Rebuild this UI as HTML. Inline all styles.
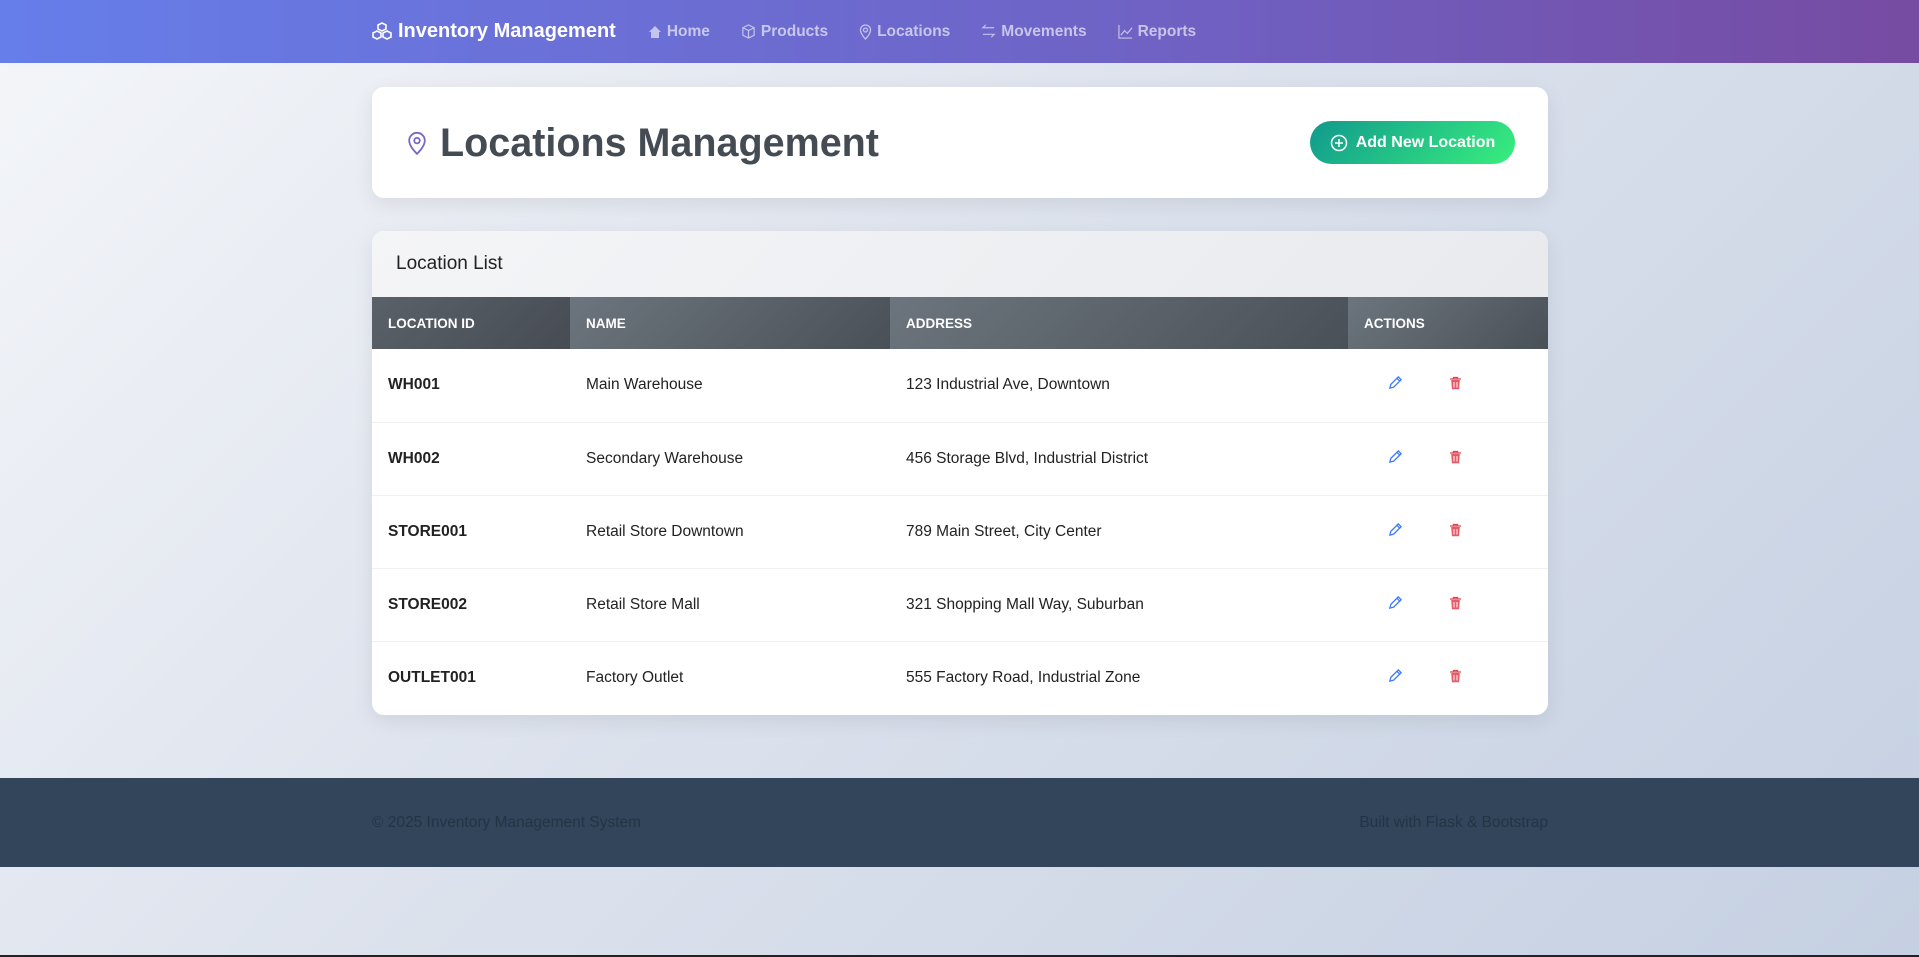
<!DOCTYPE html>
<html><head><meta charset="utf-8"><style>
*{box-sizing:border-box;margin:0;padding:0}
body{width:1919px;height:957px;overflow:hidden;font-family:"Liberation Sans",sans-serif;background:linear-gradient(135deg,#f4f6f9 0%,#dfe4ee 40%,#c5d0e2 100%);position:relative}
.nav{height:63px;background:linear-gradient(90deg,#667eea 0%,#6f62c4 60%,#764ba2 100%);display:flex;align-items:center;padding-left:372px;color:#fff}
.brand{font-weight:bold;font-size:20px;display:flex;align-items:center;gap:6px;margin-right:32px}
.nl{display:flex;align-items:center;gap:5px;color:rgba(255,255,255,.62);font-size:15.5px;font-weight:bold;margin-right:31px}
.card{position:absolute;left:372px;width:1176px;background:#fff;border-radius:12px;box-shadow:0 6px 20px rgba(0,0,0,.08)}
.hc{top:87px;height:111px}
.hc h1{position:absolute;left:68px;top:34px;font-size:39.5px;color:#444b53;font-weight:bold}
.btn{position:absolute;left:938px;top:34px;width:205px;height:43px;border-radius:22px;background:linear-gradient(135deg,#11998e,#38ef7d);color:#fff;font-weight:bold;font-size:16px;display:flex;align-items:center;justify-content:center;gap:8px}
.tc{top:231px;height:484px;overflow:hidden}
.ch{height:66px;background:linear-gradient(135deg,#f4f5f7,#e8eaee);padding:22px 24px;font-size:19px;color:#222}
table{border-collapse:collapse;width:100%;font-size:15.5px;color:#222}
th{height:52px;text-align:left;padding-left:16px;color:#fff;font-size:13.5px;background:linear-gradient(135deg,#6c757d,#4a5058)}
th:first-child{background:linear-gradient(135deg,#5a6169,#474c54)}
td{height:73px;padding-left:16px;border-bottom:1px solid #f0f0f0}
td.b{font-weight:bold}
.ft{position:absolute;top:778px;left:0;width:1919px;height:89px;background:#32455b;color:#253445;font-size:15.5px}
.ft span{position:absolute;top:36px}
</style></head><body>
<div class="nav">
<div class="brand"><svg width="20" height="20" viewBox="0 0 20 20" fill="none" stroke="#fff" stroke-width="1.6"><path d="M10 1l4 2v4l-4 2-4-2V3z M5 9l4 2v4l-4 2-4-2v-4z M15 9l4 2v4l-4 2-4-2v-4z"/></svg>Inventory Management</div>
<div class="nl"><svg width="14" height="14" viewBox="0 0 14 14"><path d="M7 1L1 7h2v6h8V7h2z" fill="rgba(255,255,255,.6)"/></svg>Home</div>
<div class="nl"><svg width="15" height="15" viewBox="0 0 16 16" fill="none" stroke="rgba(255,255,255,.6)" stroke-width="1.3"><path d="M8 1l6 3v8l-6 3-6-3V4z M2 4l6 3 6-3 M8 7v8"/></svg>Products</div>
<div class="nl"><svg width="13" height="16" viewBox="0 0 13 16" fill="none" stroke="rgba(255,255,255,.6)" stroke-width="1.3"><path d="M6.5 15s5-5 5-9a5 5 0 0 0-10 0c0 4 5 9 5 9z"/><circle cx="6.5" cy="6" r="2"/></svg>Locations</div>
<div class="nl"><svg width="15" height="15" viewBox="0 0 16 16" fill="none" stroke="rgba(255,255,255,.6)" stroke-width="1.3"><path d="M14 4H2l3-3 M2 11h12l-3 3"/></svg>Movements</div>
<div class="nl"><svg width="15" height="15" viewBox="0 0 16 16" fill="none" stroke="rgba(255,255,255,.6)" stroke-width="1.3"><path d="M1 1v14h14 M3 12l4-5 3 3 5-6"/></svg>Reports</div>
</div>
<div class="card hc">
<svg style="position:absolute;left:35px;top:44px" width="20" height="24" viewBox="0 0 16 20" fill="none" stroke="#7566c9" stroke-width="1.5"><path d="M8 19s6.5-6 6.5-11a6.5 6.5 0 0 0-13 0c0 5 6.5 11 6.5 11z"/><circle cx="8" cy="8" r="2.3"/></svg>
<h1>Locations Management</h1>
<div class="btn"><svg width="18" height="18" viewBox="0 0 18 18" fill="none" stroke="#fff" stroke-width="1.5"><circle cx="9" cy="9" r="7.5"/><path d="M9 5v8M5 9h8"/></svg>Add New Location</div>
</div>
<div class="card tc">
<div class="ch">Location List</div>
<table>
<tr><th style="width:198px">LOCATION ID</th><th style="width:320px">NAME</th><th style="width:458px">ADDRESS</th><th>ACTIONS</th></tr>
<tr><td class="b">WH001</td><td>Main Warehouse</td><td>123 Industrial Ave, Downtown</td><td class="a"></td></tr>
<tr><td class="b">WH002</td><td>Secondary Warehouse</td><td>456 Storage Blvd, Industrial District</td><td class="a"></td></tr>
<tr><td class="b">STORE001</td><td>Retail Store Downtown</td><td>789 Main Street, City Center</td><td class="a"></td></tr>
<tr><td class="b">STORE002</td><td>Retail Store Mall</td><td>321 Shopping Mall Way, Suburban</td><td class="a"></td></tr>
<tr><td class="b" style="border:none">OUTLET001</td><td style="border:none">Factory Outlet</td><td style="border:none">555 Factory Road, Industrial Zone</td><td class="a" style="border:none"></td></tr>
</table>
</div>
<div class="ft"><span style="left:372px">© 2025 Inventory Management System</span><span style="right:371px">Built with Flask &amp; Bootstrap</span></div>
<div style="position:absolute;left:0;top:955px;width:1919px;height:2px;background:#222"></div>
<script>
document.querySelectorAll('td.a').forEach(function(td){td.innerHTML='<span style="display:inline-block;margin-left:24px"><svg width="15" height="15" viewBox="0 0 16 16" fill="none" stroke="#3d7bfd" stroke-width="1.4"><path d="M11 2l3 3-8 8-4 1 1-4z M9.5 3.5l3 3"/></svg></span><span style="display:inline-block;margin-left:46px"><svg width="13" height="14" viewBox="0 0 13 14"><path d="M1 3h11M4.5 3V1.5h4V3" stroke="#e04050" stroke-width="1.3" fill="none"/><path d="M2.2 4h8.6l-.7 9.3H2.9z" fill="#e85a68"/><path d="M5 6v5.5M8 6v5.5" stroke="#fff" stroke-width="1"/></svg></span>'});
</script>
</body></html>
